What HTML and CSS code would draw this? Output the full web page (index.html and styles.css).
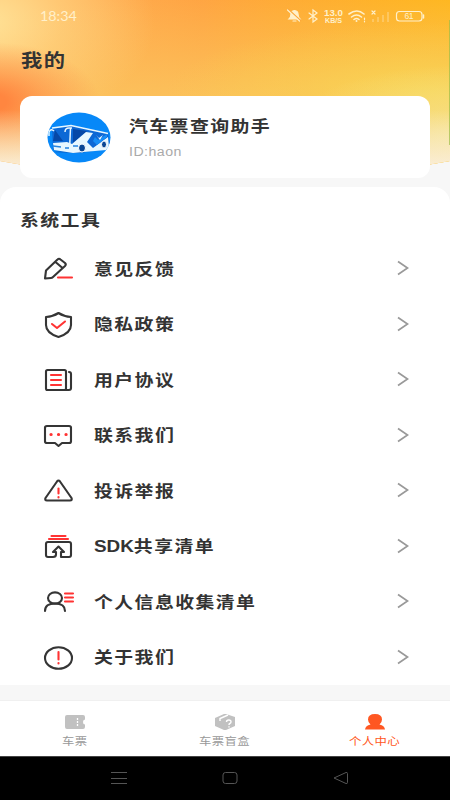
FILE: index.html
```html
<!DOCTYPE html>
<html lang="zh-CN">
<head>
<meta charset="utf-8">
<title>我的</title>
<link rel="stylesheet" href="styles.css">
</head>
<body>
<div class="screen">
  <div class="hero"></div>
  <header class="status">
    <span class="clock">18:34</span>
    <svg class="status-icons" width="142" height="18" viewBox="0 0 142 18" fill="none" stroke="#fff0ca" stroke-width="1.2" stroke-linecap="round">
      <path d="M3 12q2-2 2-5 0-3 3.500-3.500Q12 4 12 7q0 3 2 5zM7 14h3" fill="#fff0ca"/>
      <path d="M2.500 2.500l12 11" stroke="#fca739" stroke-width="1.500"/><path d="M1.500 3l12 11"/>
      <path d="M23 6l8 6-4 3V3l4 3-8 6"/>
      <g fill="#fff0ca" stroke="none" font-family="Liberation Sans" font-weight="bold"><text x="38" y="9" font-size="8.500" textLength="19" lengthAdjust="spacingAndGlyphs">13.0</text><text x="39" y="15.500" font-size="6.800" textLength="17" lengthAdjust="spacingAndGlyphs">KB/S</text></g>
      <path d="M63 7q8-6 15 0M65.500 10q5-4 10 0M68 12.500q2.500-2 5 0" stroke-width="1.600"/><circle cx="70.500" cy="14" r="1" fill="#fff0ca" stroke="none"/>
      <path d="M78.500 11v1.500M78.500 14v.8"/>
      <path d="M86 4l3 3m0-3l-3 3"/>
      <path d="M87 12v3M92 10v5M97 8v7M102 5v10" stroke-opacity=".3" stroke-width="2" stroke-linecap="butt"/>
      <rect x="110.500" y="4.500" width="25.500" height="9.500" rx="3"/><path d="M137.500 8v3" stroke-width="1.500"/>
      <text x="118.500" y="12.300" font-size="8.500" font-family="Liberation Sans" fill="#fff0ca" stroke="none" textLength="9">61</text>
    </svg>
  </header>
  <h1 class="page-title"><span class="wide">我的</span></h1>
  <section class="profile">
    <svg class="avatar" width="64" height="51" viewBox="0 0 64 51">
      <defs><clipPath id="oval"><ellipse cx="32" cy="25.500" rx="31.500" ry="25"/></clipPath></defs>
      <g clip-path="url(#oval)">
        <path fill="#0788f8" d="M0 0h64v51H0z"/>
        <path fill="#0757bd" d="M5 40l31-2 24-4v3l-28 4z"/>
        <path fill="#0d68d5" d="M5 17l20-3 36 7 2 12-37 6-20-1z"/>
        <path fill="#0648a7" d="M8 18l8 11H6zM26 17l14 2-14 12z"/>
        <path fill="#e8f7ff" d="M6 31l14-1 5 2 14-12 7 1-6 9 6 6 15-11 1 10-3 3-33 3-19-3z"/>
        <path fill="#168df7" d="M48 25l3 3 9-6v3l-10 8-4-4z"/>
        <path fill="#e8f7ff" d="M49 23l3 3 4-3-3 5z"/>
        <path d="M2 24v-4q2-4 5-1M18 20q0-4 4-4h3M5 16l19-2.500 37 8M23.500 16l-1 22" fill="none" stroke="#e8f7ff" stroke-width="1.500"/>
        <path d="M6 34l8 1m4 1h4M26 34h5" stroke="#2583df" stroke-width="1.500"/>
        <g fill="#0a4694" stroke="#fff"><ellipse cx="35" cy="36" rx="3.500" ry="4"/><ellipse cx="57" cy="32.500" rx="2.500" ry="3.500"/></g>
      </g>
    </svg>
    <div class="identity">
      <div class="name"><span class="wide">汽车票查询助手</span></div>
      <div class="uid"><span class="wide">ID:haon</span></div>
    </div>
  </section>
  <main class="tools">
    <h2 class="tools-title"><span class="wide">系统工具</span></h2>
    <ul class="list">
      <li class="row"><svg class="icon" viewBox="0 0 32 28"><path d="M2 23.500l1-8L14.500 4.500q1.500-1.500 3 0l4.500 3.500q1.500 1.500 0 3L10 22q-1 1-2 1zM12.500 7l7 6"/><path class="red" d="M15 22.500h14"/></svg><span class="label wide">意见反馈</span><svg class="chevron" viewBox="0 0 12 16"><path d="M1 1.500L10.500 8 1 14.500"/></svg></li>
      <li class="row"><svg class="icon" viewBox="0 0 32 28"><path d="M15.500 2Q21 5.500 28 6v8q0 8-12.500 12Q3 22 3 14V6Q10 5.500 15.500 2z"/><path class="red" d="M9 13l5 4 8-6.500"/></svg><span class="label wide">隐私政策</span><svg class="chevron" viewBox="0 0 12 16"><path d="M1 1.500L10.500 8 1 14.500"/></svg></li>
      <li class="row"><svg class="icon" viewBox="0 0 32 28"><rect x="3" y="4" width="20" height="20" rx="1.500"/><path d="M26 6q2 0 2 2v14q0 2-2 2h-3"/><path class="red" d="M8 9h10M8 14h10M8 19h10"/></svg><span class="label wide">用户协议</span><svg class="chevron" viewBox="0 0 12 16"><path d="M1 1.500L10.500 8 1 14.500"/></svg></li>
      <li class="row"><svg class="icon" viewBox="0 0 32 28"><path d="M4 4h22q2 0 2 1.500v14q0 1.500-2 1.500h-7l-3.500 3-3.500-3H4q-2 0-2-1.500v-14Q2 4 4 4z"/><path class="red dots" d="M8 12.500h.1M15.500 12.500h.1M23 12.500h.1"/></svg><span class="label wide">联系我们</span><svg class="chevron" viewBox="0 0 12 16"><path d="M1 1.500L10.500 8 1 14.500"/></svg></li>
      <li class="row"><svg class="icon" viewBox="0 0 32 28"><path d="M14 4.500q1.500-2 3 0L28.500 21q1 2.500-1.500 2.500H4Q1.500 23.500 2.500 21z"/><path class="red" d="M15.500 11.500v5"/><path class="red" d="M15.500 20v.5"/></svg><span class="label wide">投诉举报</span><svg class="chevron" viewBox="0 0 12 16"><path d="M1 1.500L10.500 8 1 14.500"/></svg></li>
      <li class="row"><svg class="icon" viewBox="0 0 32 28"><path d="M10 24H5q-2 0-2-2V11q0-2 2-2h21q2 0 2 2v11q0 2-2 2h-8v-5h3l-5.500-5.500L10 19h3v2.500q0 2.500-3 2.500"/><path class="red" d="M8.500 3h14M6 6h19"/></svg><span class="label wide"><span class="latin">SDK</span>共享清单</span><svg class="chevron" viewBox="0 0 12 16"><path d="M1 1.500L10.500 8 1 14.500"/></svg></li>
      <li class="row"><svg class="icon" viewBox="0 0 32 28"><ellipse cx="12" cy="10" rx="7" ry="5.600"/><path d="M2 23q0-7.500 10-7.500T22 23"/><path class="red" d="M22 5.500h8M22 9.500h8M22 13.500h8"/></svg><span class="label wide">个人信息收集清单</span><svg class="chevron" viewBox="0 0 12 16"><path d="M1 1.500L10.500 8 1 14.500"/></svg></li>
      <li class="row"><svg class="icon" viewBox="0 0 32 28"><ellipse cx="15.500" cy="14" rx="13.500" ry="10.800"/><path class="red" d="M15.500 8v7.500"/><path class="red" d="M15.500 19v.5"/></svg><span class="label wide">关于我们</span><svg class="chevron" viewBox="0 0 12 16"><path d="M1 1.500L10.500 8 1 14.500"/></svg></li>
    </ul>
  </main>
  <nav class="tabs">
    <a class="tab"><svg width="22" height="18" viewBox="0 0 22 18"><path fill="#c1c1c1" d="M3 2h16q2 0 2 2v2.500q-2 0-2 2.500t2 2.500V14q0 2-2 2H3q-2 0-2-2V4q0-2 2-2z"/><path d="M13.500 5v8" stroke="#fff" stroke-width="1.300" stroke-dasharray="2 1"/></svg><span class="tab-label">车票</span></a>
    <a class="tab"><svg width="22" height="18" viewBox="0 0 22 18"><path fill="#c1c1c1" d="M1 5l9-4h2l9 3v9l-9 4h-2l-9-4z"/><path d="M6 8V5.500L14 2" fill="none" stroke="#fff" stroke-width="1.400"/><path d="M12.500 9q0-2 2.300-2t2.200 2q0 1-1.200 1.500-.8.300-.8 1.500M15 13.300v1.200" fill="none" stroke="#fff" stroke-width="1.400"/></svg><span class="tab-label">车票盲盒</span></a>
    <a class="tab active"><svg width="22" height="18" viewBox="0 0 22 18"><path fill="#ff5722" d="M11 1q7 0 7 5.500 0 3-2.500 5 5 1 5.500 5H1q.5-4 5.500-5Q4 9.500 4 6.500 4 1 11 1z"/></svg><span class="tab-label">个人中心</span></a>
  </nav>
  <footer class="system">
    <svg width="16" height="14" viewBox="0 0 16 14"><path d="M0 1.500h16M0 7.500h16M0 12.500h16"/></svg>
    <svg width="16" height="14" viewBox="0 0 16 14"><rect x="1" y="1.500" width="14" height="11" rx="2.500"/></svg>
    <svg width="16" height="14" viewBox="0 0 16 14"><path d="M1 7l12-5.500q1.500-.3 1.500 1v9q0 1.300-1.500 1z"/></svg>
  </footer>
</div>
</body>
</html>
```
FILE: styles.css
```css
* { box-sizing: border-box; }
body { margin: 0; font-family: "Liberation Sans", "Noto Sans CJK SC", sans-serif; color: #333; }
h1, h2, ul { margin: 0; padding: 0; font-weight: bold; }
.screen { position: relative; width: 450px; height: 800px; display: flex; flex-direction: column; background: #f7f7f7; overflow: hidden; }
.hero {
  position: absolute; inset: 0 0 auto; height: 174px;
  clip-path: ellipse(500px 180.3px at 225px 0);
  background:
    linear-gradient(rgba(157,189,72,.7), rgba(157,189,72,.7)) 449px 20px / 1px 125px no-repeat,
    linear-gradient(180deg, rgba(250,242,232,0) 110px, rgba(250,242,232,.85) 166px),
    radial-gradient(ellipse 110px 60px at -10px 102px, #ff8640 15%, rgba(255,134,64,.55) 50%, rgba(255,134,64,0) 100%),
    radial-gradient(ellipse 170px 110px at -15px 22px, #ffe297, rgba(255,224,145,.5) 45%, rgba(255,221,140,0) 100%),
    radial-gradient(ellipse 190px 70px at 470px 135px, #f6e48f, rgba(246,228,143,0) 100%),
    radial-gradient(ellipse 260px 70px at 425px 92px, rgba(247,218,82,.75), rgba(247,214,80,.35) 50%, rgba(247,214,80,0) 100%),
    linear-gradient(175deg, rgba(251,196,95,0) 10px, rgba(251,198,95,.85) 115px),
    linear-gradient(90deg, #ffb660, #ffa341 45%, #ffb30f);
}
.status { position: relative; height: 32px; display: flex; justify-content: space-between; padding: 7px 22px 0 40px; }
.clock { font: 13px/19px Lato, "Liberation Sans", sans-serif; color: #fff0ca; width: 36px; transform: scaleX(1.1); transform-origin: left; }
.wide { display: inline-block; transform: scaleX(1.18); transform-origin: left center; white-space: nowrap; letter-spacing: 1.2px; }
.page-title { position: relative; height: 64px; padding: 16px 21px; font-size: 18px; line-height: 26px; }
.profile { position: relative; height: 82px; margin: 0 20px; padding: 0 27px; border-radius: 12px; background: #fff; display: flex; align-items: center; gap: 18px; }
.name { font-size: 16px; line-height: 24px; font-weight: bold; }
.identity { padding-top: 2px; }
.uid { margin-top: 4px; font-size: 12px; line-height: 18px; color: #aaa; }
.uid .wide { letter-spacing: .4px; }
.tools { margin-top: 9px; height: 498px; padding-top: 22px; border-radius: 16px 16px 0 0; background: #fff; }
.tools-title { padding-left: 20px; font-size: 16px; line-height: 24px; }
.list { list-style: none; margin-top: 8.5px; }
.row { height: 55.5px; padding: 0 41px 0 43px; display: flex; align-items: center; }
.icon { width: 32px; height: 28px; margin-right: 19px; fill: none; stroke: #353535; stroke-width: 2.1; stroke-linecap: round; stroke-linejoin: round; }
.icon .red { stroke: #f33; }
.icon .dots { stroke-width: 3.2; }
.label { font-size: 16px; line-height: 24px; font-weight: bold; padding-top: 1px; }
.latin { letter-spacing: 0; }
.chevron { width: 12px; height: 16px; margin: 0 0 2px auto; fill: none; stroke: #999; stroke-width: 1.7; }
.tabs { margin-top: 15px; height: 56px; border-top: 1px solid #f0f0f0; background: #fff; display: flex; }
.tab { flex: 1; display: flex; flex-direction: column; align-items: center; padding-top: 12px; color: #999; }
.tab-label { font-size: 10.5px; line-height: 16px; margin-top: 2px; letter-spacing: .3px; transform: scaleX(1.18); }
.active { color: #ff5722; }
.system { height: 44px; background: #000; border-top: 1px solid #444; display: flex; justify-content: center; align-items: center; gap: 95px; padding-left: 9px; padding-bottom: 2px; }
.system svg { fill: none; stroke: #555; stroke-width: 1; }
```
